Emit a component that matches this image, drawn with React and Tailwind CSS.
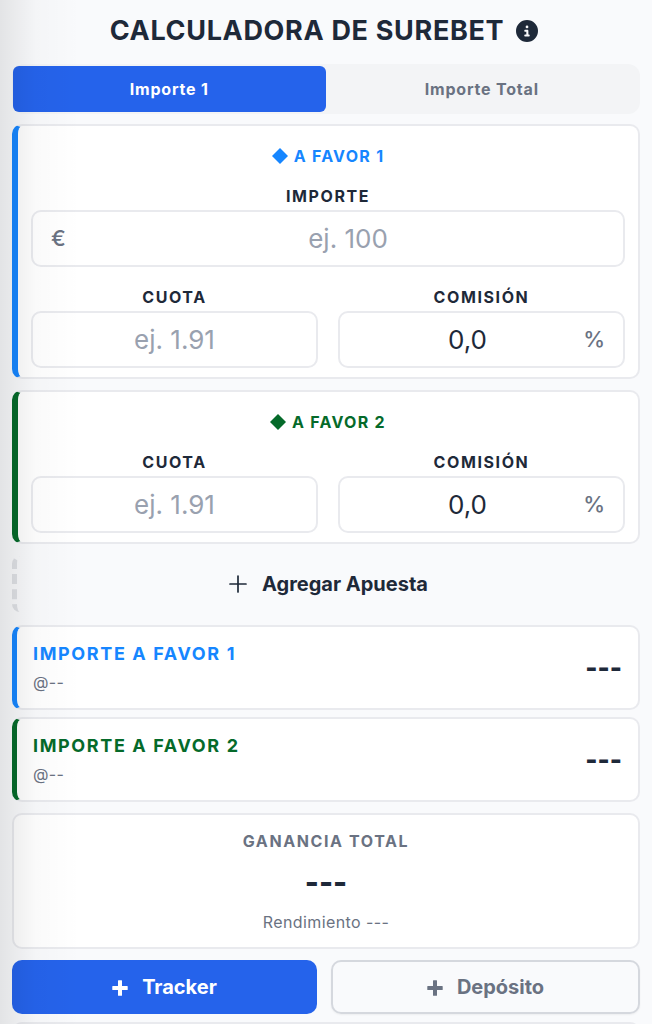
import React, { useState } from "react";
import clsx from "clsx";
import { FaCircleInfo } from "react-icons/fa6";

const BETS = [
    { id: 1, name: "A FAVOR 1", text: "text-[#1686ff]", border: "border-l-[#1686ff]", hasAmount: true },
    { id: 2, name: "A FAVOR 2", text: "text-[#056a2a]", border: "border-l-[#056a2a]", hasAmount: false },
];

const MODES = ["Importe 1", "Importe Total"];

function BoldPlus() {
    return (
        <svg viewBox="0 0 16 16" className="mt-0.5 size-4" fill="currentColor">
            <path d="M6 .8q0-.5.5-.5h3q.5 0 .5.5V6h5.200q.5 0 .5.5v3q0 .5-.5.5H10v5.200q0 .5-.5.5h-3q-.5 0-.5-.5V10H.8q-.5 0-.5-.5v-3q0-.5.5-.5H6z" />
        </svg>
    );
}

function Field({ id, label, prefix, suffix, ...inputProps }) {
    return (
        <div className="flex min-w-0 flex-1 flex-col">
            <label htmlFor={id} className="text-center text-base leading-7 font-bold tracking-widest text-gray-800">
                {label}
            </label>
            <div className="relative">
                {prefix && (
                    <span className="absolute inset-y-0 left-5 flex items-center text-[22px] font-medium text-gray-500">{prefix}</span>
                )}
                <input
                    id={id}
                    type="text"
                    className={clsx(
                        "h-[57px] w-full rounded-[10px] border-2 border-[#e9eaee] bg-transparent text-center text-[26px] text-gray-800 placeholder:text-gray-400",
                        prefix ? "pl-15" : "pl-5",
                        suffix ? "pr-12" : "pr-5"
                    )}
                    {...inputProps}
                />
                {suffix && (
                    <span className="absolute inset-y-0 right-5 flex items-center text-[22px] font-medium text-gray-500">{suffix}</span>
                )}
            </div>
        </div>
    );
}

function BetCard({ bet }) {
    return (
        <section className={clsx("rounded-[10px] border-2 border-l-[6px] border-[#e9eaee] bg-white px-[13px] pt-[18px] pb-[9px]", bet.border)}>
            <h2 className={clsx("flex items-center justify-center gap-[6px] text-base leading-6 font-bold tracking-[0.08em]", bet.text)}>
                <svg viewBox="0 0 16 16" className="size-4" fill="currentColor">
                    <path d="M8 0l8 8-8 8-8-8z" />
                </svg>
                {bet.name}
            </h2>
            <div className="mt-[14px] flex flex-col gap-4">
                {bet.hasAmount && <Field id={`importe-${bet.id}`} label="IMPORTE" prefix="€" placeholder="ej. 100" />}
                <div className="flex gap-5">
                    <Field id={`cuota-${bet.id}`} label="CUOTA" placeholder="ej. 1.91" />
                    <Field id={`comision-${bet.id}`} label="COMISIÓN" suffix="%" defaultValue="0,0" />
                </div>
            </div>
        </section>
    );
}

function ResultCard({ bet }) {
    return (
        <section className={clsx("flex items-center justify-between rounded-[10px] border-2 border-l-[5px] border-[#e9eaee] bg-white px-4 pt-[13px] pb-3", bet.border)}>
            <div>
                <h3 className={clsx("text-lg leading-7 font-bold tracking-[0.09em]", bet.text)}>IMPORTE {bet.name}</h3>
                <p className="text-base leading-7 tracking-wide text-gray-500">@--</p>
            </div>
            <span className="text-[26px] leading-9 font-extrabold text-gray-800">---</span>
        </section>
    );
}

export default function App() {
    const [mode, setMode] = useState(MODES[0]);

    return (
        <div className="relative h-screen overflow-hidden bg-[#f9fafc] px-3 font-['Inter',sans-serif]">
            <header className="flex h-16 items-center justify-center gap-3 pr-1 pb-0.5 text-gray-800">
                <h1 className="text-[27px] font-bold tracking-wide">CALCULADORA DE SUREBET</h1>
                <button aria-label="Información">
                    <FaCircleInfo size={22} />
                </button>
            </header>

            <div className="flex rounded-xl bg-gray-100 py-0.5 pr-0.5 pl-px">
                {MODES.map((m) => (
                    <button
                        key={m}
                        onClick={() => setMode(m)}
                        className={clsx(
                            "h-[46px] flex-1 rounded-md text-base font-bold tracking-wider",
                            m === mode ? "bg-[#2563eb] text-white" : "text-gray-500"
                        )}
                    >
                        {m}
                    </button>
                ))}
            </div>

            <main className="mt-[10px] flex flex-col">
                <div className="flex flex-col gap-[11px]">
                    {BETS.map((bet) => (
                        <BetCard key={bet.id} bet={bet} />
                    ))}
                </div>

                <button className="mt-3 mb-[13px] flex h-14 items-center justify-center gap-[15px] rounded-l-lg border-l-[5px] border-dashed border-[#dfe1e5] text-xl font-bold text-gray-800">
                    <svg viewBox="0 0 18 18" className="size-[18px]" fill="none" stroke="currentColor" strokeWidth="1.7" strokeLinecap="round">
                        <path d="M9 1v16M1 9h16" />
                    </svg>
                    Agregar Apuesta
                </button>

                <div className="flex flex-col gap-[7px]">
                    {BETS.map((bet) => (
                        <ResultCard key={bet.id} bet={bet} />
                    ))}
                </div>

                <section className="mt-[11px] rounded-[10px] border-2 border-[#e9eaee] bg-white pt-3 pb-[11px] text-center">
                    <h3 className="text-base leading-7 font-bold tracking-widest text-gray-500">GANANCIA TOTAL</h3>
                    <p className="mt-0.5 mb-px text-[30px] leading-[50px] font-extrabold text-gray-800">---</p>
                    <p className="text-base leading-7 tracking-wide text-gray-500">Rendimiento ---</p>
                </section>

                <div className="mt-[11px] flex gap-[14px] text-xl font-bold">
                    <button className="flex h-[54px] flex-1 items-center justify-center gap-[14px] rounded-[10px] bg-[#2563eb] text-white">
                        <BoldPlus />
                        Tracker
                    </button>
                    <button className="flex h-[54px] flex-1 items-center justify-center gap-[14px] rounded-[10px] border-2 border-[#d5d8de] text-gray-500 shadow-xs">
                        <BoldPlus />
                        Depósito
                    </button>
                </div>

                <section className="mt-2 h-3 rounded-t-[10px] border-2 border-[#e9eaee] bg-white" />
            </main>

            <div className="pointer-events-none absolute inset-y-0 left-0 w-20 bg-linear-to-r from-black/9 via-black/2 via-45% to-transparent" />
        </div>
    );
}
